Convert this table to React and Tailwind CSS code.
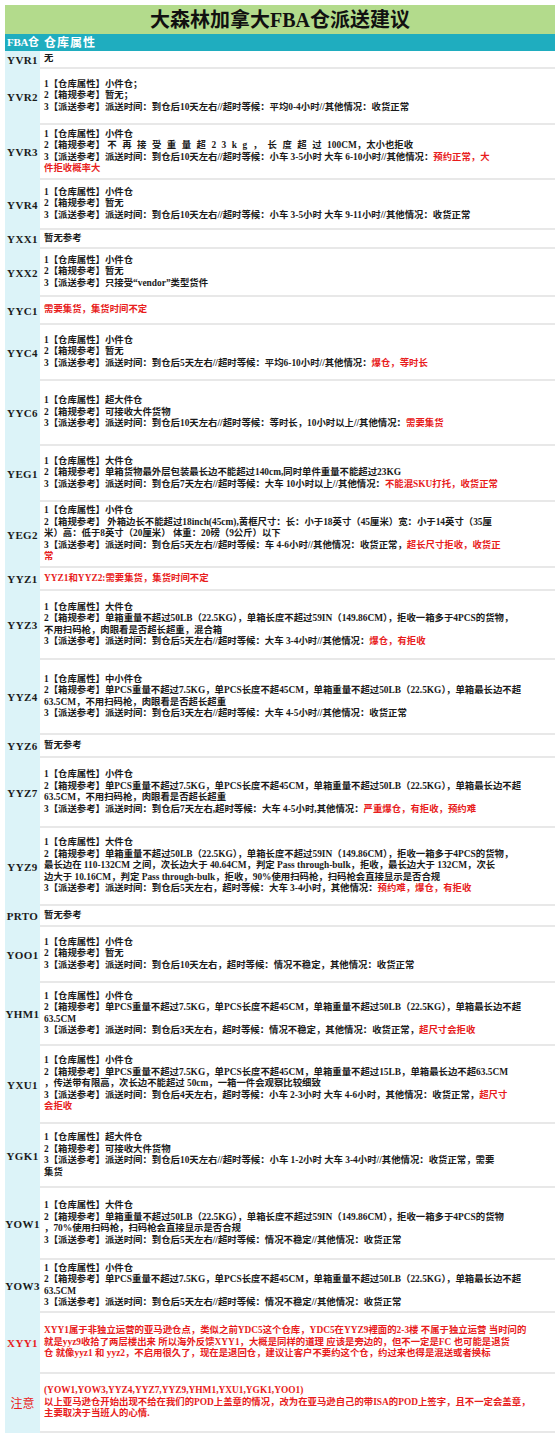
import React from "react";

const RED = "text-[#e81c1c]";

function Line({ line }) {
  if (typeof line !== "string") return <div>{line}</div>;
  const [a, b] = line.split("§");
  return (
    <div>
      {a}
      {b !== undefined && <span className={RED}>{b}</span>}
    </div>
  );
}

const rows = [
  { k: "YVR1", h: "h-[18px]", l: ["无"] },
  {
    k: "YVR2",
    h: "h-[56px]",
    l: [
      "1【仓库属性】小件仓；",
      "2【箱规参考】暂无；",
      "3【派送参考】派送时间：到仓后10天左右//超时等候：平均0-4小时//其他情况：收货正常",
    ],
  },
  {
    k: "YVR3",
    h: "h-[55px]",
    l: [
      "1【仓库属性】小件仓",
      <>
        2【箱规参考】 <span className="tracking-[5.5px]">不再接受重量超23kg，长度超过</span>100CM，太小也拒收
      </>,
      "3【派送参考】派送时间：到仓后10天左右//超时等候：小车 3-5小时 大车 6-10小时//其他情况：§预约正常，大",
      "§件拒收概率大",
    ],
  },
  {
    k: "YVR4",
    h: "h-[50px]",
    l: [
      "1【仓库属性】小件仓",
      "2【箱规参考】暂无",
      "3【派送参考】派送时间：到仓后10天左右//超时等候：小车 3-5小时 大车 9-11小时//其他情况：收货正常",
    ],
  },
  { k: "YXX1", h: "h-[19px]", l: ["暂无参考"] },
  {
    k: "YXX2",
    h: "h-[48px]",
    l: ["1【仓库属性】小件仓", "2【箱规参考】暂无", "3【派送参考】只接受“vendor”类型货件"],
  },
  { k: "YYC1", h: "h-[28px]", l: ["§需要集货，集货时间不定"] },
  {
    k: "YYC4",
    h: "h-[56px]",
    l: [
      "1【仓库属性】小件仓",
      "2【箱规参考】暂无",
      "3【派送参考】派送时间：到仓后5天左右//超时等候：平均6-10小时//其他情况：§爆仓，等时长",
    ],
  },
  {
    k: "YYC6",
    h: "h-[65px]",
    l: [
      "1【仓库属性】超大件仓",
      "2【箱规参考】可接收大件货物",
      "3【派送参考】派送时间：到仓后10天左右//超时等候：等时长，10小时以上//其他情况：§需要集货",
    ],
  },
  {
    k: "YEG1",
    h: "h-[56px]",
    l: [
      "1【仓库属性】大件仓",
      "2【箱规参考】单箱货物最外层包装最长边不能超过140cm,同时单件重量不能超过23KG",
      "3【派送参考】派送时间：到仓后7天左右//超时等候：大车 10小时以上//其他情况：§不能混SKU打托，收货正常",
    ],
  },
  {
    k: "YEG2",
    h: "h-[66px]",
    l: [
      "1【仓库属性】小件仓",
      "2【箱规参考】 外箱边长不能超过18inch(45cm),黄框尺寸：长：小于18英寸（45厘米）宽：小于14英寸（35厘",
      "米）高：低于8英寸（20厘米） 体重：20磅（9公斤）以下",
      "3【派送参考】派送时间：到仓后5天左右//超时等候：车 4-6小时//其他情况：收货正常，§超长尺寸拒收，收货正",
      "§常",
    ],
  },
  { k: "YYZ1", h: "h-[23px]", l: ["§YYZ1和YYZ2:需要集货，集货时间不定"] },
  {
    k: "YYZ3",
    h: "h-[69px]",
    l: [
      "1【仓库属性】大件仓",
      "2【箱规参考】单箱重量不超过50LB（22.5KG），单箱长度不超过59IN（149.86CM），拒收一箱多于4PCS的货物，",
      "不用扫码枪，肉眼看是否超长超重，混合箱",
      "3【派送参考】派送时间：到仓后5天左右//超时等候：大车 3-4小时//其他情况：§爆仓，有拒收",
    ],
  },
  {
    k: "YYZ4",
    h: "h-[75px]",
    l: [
      "1【仓库属性】中小件仓",
      "2【箱规参考】单PCS重量不超过7.5KG，单PCS长度不超45CM，单箱重量不超过50LB（22.5KG），单箱最长边不超",
      "63.5CM，不用扫码枪，肉眼看是否超长超重",
      "3【派送参考】派送时间：到仓后3天左右//超时等候：大车 4-5小时//其他情况：收货正常",
    ],
  },
  { k: "YYZ6", h: "h-[23px]", l: ["暂无参考"] },
  {
    k: "YYZ7",
    h: "h-[70px]",
    l: [
      "1【仓库属性】小件仓",
      "2【箱规参考】单PCS重量不超过7.5KG，单PCS长度不超45CM，单箱重量不超过50LB（22.5KG），单箱最长边不超",
      "63.5CM，不用扫码枪，肉眼看是否超长超重",
      "3【派送参考】派送时间：到仓后7天左右,超时等候：大车 4-5小时,其他情况：§严重爆仓，有拒收，预约难",
    ],
  },
  {
    k: "YYZ9",
    h: "h-[78px]",
    l: [
      "1【仓库属性】大件仓",
      "2【箱规参考】单箱重量不超过50LB（22.5KG），单箱长度不超过59IN（149.86CM），拒收一箱多于4PCS的货物，",
      "最长边在 110-132CM 之间，次长边大于 40.64CM，判定 Pass through-bulk，拒收，最长边大于 132CM，次长",
      "边大于 10.16CM，判定 Pass through-bulk，拒收，90%使用扫码枪，扫码枪会直接显示是否合规",
      "3【派送参考】派送时间：到仓后5天左右，超时等候：大车 3-4小时，其他情况：§预约难，爆仓，有拒收",
    ],
  },
  { k: "PRTO", h: "h-[21px]", l: ["暂无参考"] },
  {
    k: "YOO1",
    h: "h-[56px]",
    l: [
      "1【仓库属性】小件仓",
      "2【箱规参考】暂无",
      "3【派送参考】派送时间：到仓后10天左右，超时等候：情况不稳定，其他情况：收货正常",
    ],
  },
  {
    k: "YHM1",
    h: "h-[63px]",
    l: [
      "1【仓库属性】小件仓",
      "2【箱规参考】单PCS重量不超过7.5KG，单PCS长度不超45CM，单箱重量不超过50LB（22.5KG），单箱最长边不超",
      "63.5CM",
      "3【派送参考】派送时间：到仓后3天左右，超时等候：情况不稳定，其他情况：收货正常，§超尺寸会拒收",
    ],
  },
  {
    k: "YXU1",
    h: "h-[78px]",
    l: [
      "1【仓库属性】小件仓",
      "2【箱规参考】单PCS重量不超过7.5KG，单PCS长度不超45CM，单箱重量不超过15LB，单箱最长边不超63.5CM",
      "，传送带有限高，次长边不能超过 50cm，一箱一件会观察比较细致",
      "3【派送参考】派送时间：到仓后4天左右，超时等候：小车 2-3小时 大车 4-6小时，其他情况：收货正常，§超尺寸",
      "§会拒收",
    ],
  },
  {
    k: "YGK1",
    h: "h-[64px]",
    l: [
      "1【仓库属性】超大件仓",
      "2【箱规参考】可接收大件货物",
      "3【派送参考】派送时间：到仓后10天左右//超时等候：小车 1-2小时 大车 3-4小时//其他情况：收货正常，需要",
      "集货",
    ],
  },
  {
    k: "YOW1",
    h: "h-[72px]",
    l: [
      "1【仓库属性】大件仓",
      "2【箱规参考】单箱重量不超过50LB（22.5KG），单箱长度不超过59IN（149.86CM），拒收一箱多于4PCS的货物",
      "，70%使用扫码枪，扫码枪会直接显示是否合规",
      "3【派送参考】派送时间：到仓后5天左右//超时等候：情况不稳定//其他情况：收货正常",
    ],
  },
  {
    k: "YOW3",
    h: "h-[53px]",
    l: [
      "1【仓库属性】小件仓",
      "2【箱规参考】单PCS重量不超过7.5KG，单PCS长度不超45CM，单箱重量不超过50LB（22.5KG），单箱最长边不超",
      "63.5CM",
      "3【派送参考】派送时间：到仓后5天左右//超时等候：情况不稳定//其他情况：收货正常",
    ],
  },
  {
    k: "XYY1",
    red: true,
    h: "h-[61px]",
    l: [
      "§XYY1属于非独立运营的亚马逊仓点，类似之前YDC5这个仓库，YDC5在YYZ9裡面的2-3楼 不属于独立运营 当时问的",
      "§就是yyz9收拾了两层楼出来 所以海外反馈XYY1，大概是同样的道理 应该是旁边的，但不一定是FC 也可能是退货",
      "§仓 就像yyz1 和 yyz2，不启用很久了，现在是退回仓，建议让客户不要约这个仓，约过来也得是混送或者换标",
    ],
  },
  {
    k: "注意",
    red: true,
    cjk: true,
    h: "h-[59px]",
    l: [
      "§(YOW1,YOW3,YYZ4,YYZ7,YYZ9,YHM1,YXU1,YGK1,YOO1)",
      "§以上亚马逊仓开始出现不给在我们的POD上盖章的情况，改为在亚马逊自己的带ISA的POD上签字，且不一定会盖章，",
      "§主要取决于当班人的心情.",
    ],
  },
];

export default function App() {
  return (
    <div className="w-[560px] bg-white p-[5px] font-['Liberation_Serif','Noto_Sans_CJK_SC',serif] text-[#1a1a1a]">
      <div className="h-[29px] bg-[#b3db8c] flex items-center justify-center text-[20px] font-bold text-[#111]">
        大森林加拿大FBA仓派送建议
      </div>
      <div className="h-[17px] bg-[#1fadbf] flex items-center text-white font-bold whitespace-nowrap">
        <div className="w-[37px] shrink-0 pl-[2px] text-[11px] tracking-[-0.3px]">FBA仓</div>
        <div className="pl-[2px] text-[12px] tracking-[1px]">仓库属性</div>
      </div>
      {rows.map((r) => (
        <div key={r.k} className={`flex ${r.h}`}>
          <div
            className={`w-[35px] shrink-0 bg-[#dcf3f8] flex items-center justify-center whitespace-nowrap ${
              r.cjk ? "text-[12px] font-normal" : "text-[11px] font-bold tracking-[0.4px]"
            } ${r.red ? RED : "text-[#1a1a1a]"}`}
          >
            {r.k}
          </div>
          <div className="flex-1 min-w-0 flex flex-col justify-center pl-[4px] border-b-2 border-[#e8e8e8] text-[9.4px] leading-[11.5px] whitespace-pre font-semibold overflow-hidden">
            {r.l.map((line, i) => (
              <Line key={i} line={line} />
            ))}
          </div>
        </div>
      ))}
    </div>
  );
}
